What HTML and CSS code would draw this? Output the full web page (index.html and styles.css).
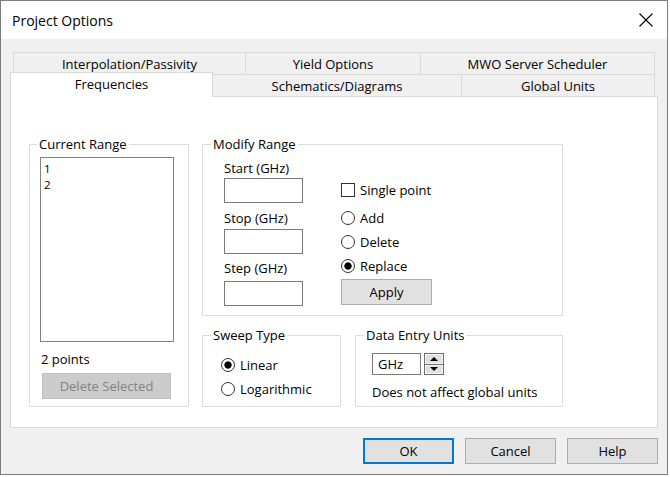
FILE: index.html
```html
<!DOCTYPE html>
<html>
<head>
<meta charset="utf-8">
<title>Project Options</title>
<link rel="stylesheet" href="styles.css">
</head>
<body>
<div class="window">
  <div class="titlebar">
    <span class="title">Project Options</span>
    <svg class="close" width="14" height="14" viewBox="0 0 14 14"><path d="M0.5 0.5 L13.5 13.5 M13.5 0.5 L0.5 13.5" stroke="#000" stroke-width="1.1" fill="none"/></svg>
  </div>
  <div class="client">
    <div class="tabs">
      <div class="tabrow row1">
        <div class="tab t-interp">Interpolation/Passivity</div>
        <div class="tab t-yield">Yield Options</div>
        <div class="tab t-mwo">MWO Server Scheduler</div>
      </div>
      <div class="tabrow row2">
        <div class="tab t-freq selected">Frequencies</div>
        <div class="tab t-schem">Schematics/Diagrams</div>
        <div class="tab t-global">Global Units</div>
      </div>
    </div>
    <div class="panel">
      <fieldset class="group g-current">
        <legend class="lg-current">Current Range</legend>
        <div class="gbody current-body">
          <div class="listbox">
            <div class="item">1</div>
            <div class="item">2</div>
          </div>
          <div class="count">2 points</div>
          <div class="btn disabled btn-delete">Delete Selected</div>
        </div>
      </fieldset>
      <div class="rightcol">
        <fieldset class="group g-modify">
          <legend>Modify Range</legend>
          <div class="gbody modify-body">
            <div class="fields">
              <div class="label l1">Start (GHz)</div>
              <div class="input i1"></div>
              <div class="label l2">Stop (GHz)</div>
              <div class="input i2"></div>
              <div class="label l3">Step (GHz)</div>
              <div class="input i3"></div>
            </div>
            <div class="options">
              <div class="opt"><span class="check"></span><span>Single point</span></div>
              <div class="radios">
                <div class="opt"><span class="radio"></span><span>Add</span></div>
                <div class="opt"><span class="radio"></span><span>Delete</span></div>
                <div class="opt"><span class="radio on"></span><span>Replace</span></div>
              </div>
              <div class="btn btn-apply">Apply</div>
            </div>
          </div>
        </fieldset>
        <div class="lowergroups">
          <fieldset class="group g-sweep">
            <legend>Sweep Type</legend>
            <div class="gbody sweep-body">
              <div class="opt"><span class="radio on"></span><span>Linear</span></div>
              <div class="opt"><span class="radio"></span><span>Logarithmic</span></div>
            </div>
          </fieldset>
          <fieldset class="group g-units">
            <legend>Data Entry Units</legend>
            <div class="gbody units-body">
              <div class="units-row">
                <div class="unitfield">GHz</div>
                <div class="spin">
                  <div class="spinhalf"><span class="tri up"></span></div>
                  <div class="spinhalf"><span class="tri down"></span></div>
                </div>
              </div>
              <div class="note">Does not affect global units</div>
            </div>
          </fieldset>
        </div>
      </div>
    </div>
    <div class="buttons">
      <div class="btn btn-dlg default">OK</div>
      <div class="btn btn-dlg">Cancel</div>
      <div class="btn btn-dlg">Help</div>
    </div>
  </div>
</div>
</body>
</html>
```
FILE: styles.css
```css
* { box-sizing: border-box; }
html, body { margin: 0; padding: 0; background: #ffffff; }
body {
  font-family: "Open Sans", "Noto Sans", sans-serif;
  font-size: 13px;
  line-height: 16px;
  color: #000;
}
.window {
  width: 668px;
  height: 475px;
  border: 1px solid #7c7c7c;
  display: flex;
  flex-direction: column;
}
.titlebar {
  height: 38px;
  background: #fff;
  display: flex;
  align-items: center;
  justify-content: space-between;
  padding: 0 14px 0 11px;
}
.title { font-size: 14px; line-height: 20px; padding-top: 1px; }
.close { display: block; }
.client {
  flex: 1;
  background: #f0f0f0;
  display: flex;
  flex-direction: column;
}
.tabs { margin-top: 13px; }
.tabrow { display: flex; }
.row1 { margin-left: 12px; height: 22px; }
.row2 { margin-left: 9px; height: 22px; }
.tab {
  border: 1px solid #d9d9d9;
  border-bottom: none;
  background: #f0f0f0;
  text-align: center;
  padding-top: 3px;
  margin-left: -1px;
}
.tab:first-child { margin-left: 0; }
.t-interp { width: 233px; }
.t-yield { width: 176px; }
.t-mwo { width: 235px; }
.t-freq { width: 203px; }
.t-schem { width: 250px; }
.t-global { width: 194px; }
.tab.selected {
  background: #fff;
  height: 25px;
  margin-top: -2px;
  padding-top: 3px;
  position: relative;
  z-index: 1;
}
.panel {
  margin-left: 9px;
  width: 648px;
  height: 332px;
  background: #fff;
  border: 1px solid #d9d9d9;
  padding: 39px 0 0 18px;
  display: flex;
  gap: 13px;
}
.group {
  margin: 0;
  border: 1px solid #dcdcdc;
  padding: 0;
  min-width: 0;
}
.group legend {
  margin-left: 8px;
  padding: 0 2px;
  line-height: 16px;
}
.group legend.lg-current { margin-left: 7px; }
.g-current { width: 160px; height: 271px; }
.current-body { padding-left: 10px; }
.listbox {
  margin-top: 5px;
  width: 134px;
  height: 185px;
  border: 1px solid #828282;
  background: #fff;
  padding: 3px 0 0 3px;
}
.item { height: 16px; font-size: 11.5px; line-height: 16px; }
.count { margin-top: 9px; padding-left: 1px; }
.btn {
  height: 26px;
  background: #e1e1e1;
  border: 1px solid #adadad;
  display: flex;
  align-items: center;
  justify-content: center;
}
.btn.disabled {
  background: #cccccc;
  border-color: #bfbfbf;
  color: #838383;
}
.btn-delete { margin-top: 6px; margin-left: 2px; width: 129px; }
.rightcol { display: flex; flex-direction: column; }
.g-modify { width: 361px; height: 180px; }
.modify-body { display: flex; gap: 38px; padding-left: 21px; }
.fields { display: flex; flex-direction: column; width: 79px; }
.input {
  width: 79px;
  height: 25px;
  border: 1px solid #7a7a7a;
  background: #fff;
}
.l1 { margin-top: 8px; }
.i1 { margin-top: 2px; }
.l2 { margin-top: 7px; }
.i2 { margin-top: 3px; }
.l3 { margin-top: 6px; }
.i3 { margin-top: 5px; }
.options { margin-top: 26px; display: flex; flex-direction: column; }
.opt { display: flex; align-items: center; height: 24px; gap: 5px; white-space: nowrap; }
.radios { margin-top: 4px; }
.check {
  width: 14px;
  height: 14px;
  border: 1px solid #333;
  background: #fff;
}
.radio {
  width: 14px;
  height: 14px;
  border: 1px solid #333;
  border-radius: 50%;
  background: #fff;
}
.radio.on { background: radial-gradient(circle, #000 0 3.3px, #fff 4px); }
.btn-apply { margin-top: 1px; width: 91px; }
.lowergroups { display: flex; gap: 14px; margin-top: 11px; }
.g-sweep { width: 139px; height: 80px; }
.sweep-body { margin-top: 10px; padding-left: 18px; }
.g-units { width: 208px; height: 80px; }
.units-body { padding-left: 16px; }
.units-row { display: flex; gap: 3px; margin-top: 10px; }
.unitfield {
  width: 49px;
  height: 22px;
  border: 1px solid #7a7a7a;
  background: #fff;
  padding-left: 5px;
  line-height: 20px;
}
.spin {
  width: 20px;
  height: 22px;
  border: 1px solid #6d6d6d;
  display: flex;
  flex-direction: column;
  background: #6d6d6d;
  gap: 1px;
}
.spinhalf {
  flex: 1;
  background: #e1e1e1;
  border: 1px solid #f6f6f6;
  display: flex;
  align-items: center;
  justify-content: center;
}
.tri { width: 0; height: 0; border-left: 4px solid transparent; border-right: 4px solid transparent; }
.tri.up { border-bottom: 4px solid #000; }
.tri.down { border-top: 4px solid #000; }
.note { margin-top: 9px; white-space: nowrap; }
.buttons {
  display: flex;
  justify-content: flex-end;
  gap: 11px;
  padding-right: 9px;
  margin-top: 10px;
}
.btn-dlg { width: 91px; }
.btn-dlg.default { border: 2px solid #0078d7; }
```
